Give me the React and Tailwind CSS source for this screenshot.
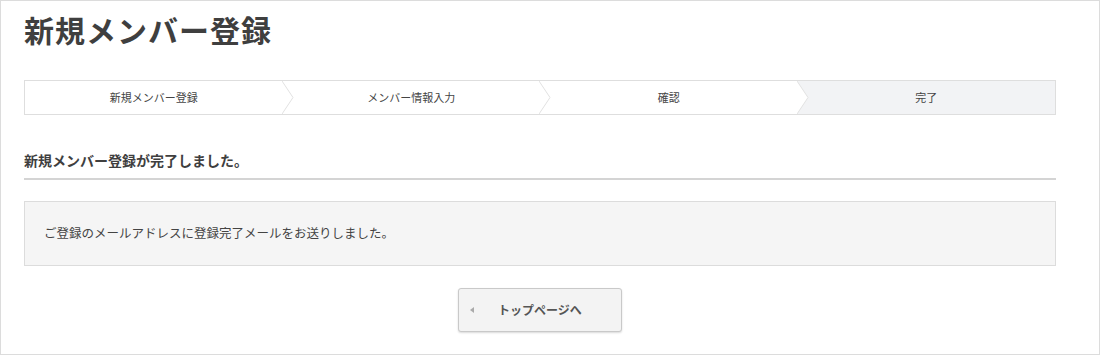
import React from 'react'

const steps = ['新規メンバー登録', 'メンバー情報入力', '確認', '完了']

const font = { fontFamily: '"Noto Sans CJK JP", "Noto Sans", sans-serif' }

// chevron drawn over the start of the next step
const Chevron = () => (
  <svg
    className="absolute top-0 right-[-11px] z-10 h-full w-[12px]"
    viewBox="0 0 12 33"
    preserveAspectRatio="none"
  >
    <polygon points="0,0 11,16.5 0,33" fill="#ffffff" />
    <polyline points="0,0 11,16.5 0,33" fill="none" stroke="#e2e2e2" strokeWidth="1" />
  </svg>
)

export default function App() {
  return (
    <div
      className="box-border h-[355px] w-[1100px] border border-[#dcdcdc] bg-white pl-[23px] pr-[43px] pt-[8px] text-[#444]"
      style={font}
    >
      <h1 className="text-[30px] font-bold leading-[40px] tracking-[1px] text-[#3f3f3f]">新規メンバー登録</h1>

      {/* steps */}
      <div className="mt-[31px] flex h-[35px] border border-[#dedede]">
        {steps.map((s, i) => (
          <div
            key={s}
            className={
              'relative flex flex-1 items-center justify-center text-[11px] text-[#444] ' +
              (i === steps.length - 1 ? 'bg-[#f2f3f5]' : 'bg-white')
            }
          >
            {s}
            {i < steps.length - 1 && <Chevron />}
          </div>
        ))}
      </div>

      <h2 className="mt-[35px] border-b-2 border-[#d4d4d4] pb-[8px] text-[14px] font-bold leading-[20px] text-[#3f3f3f]">
        新規メンバー登録が完了しました。
      </h2>

      <div className="mt-[21px] flex h-[65px] items-center border border-[#dcdcdc] bg-[#f5f5f5] pl-[19px] text-[12.5px] text-[#444]">
        ご登録のメールアドレスに登録完了メールをお送りしました。
      </div>

      <div className="mt-[22px] flex justify-center">
        <button className="relative flex h-[44px] w-[164px] items-center justify-center rounded-[3px] border border-[#c9c9c9] bg-[#f3f3f3] text-[12px] font-bold text-[#555] shadow-[0_1px_2px_rgba(0,0,0,0.15)]">
          <span className="absolute left-[11px] top-1/2 h-0 w-0 -translate-y-1/2 border-y-[3.5px] border-r-[4px] border-y-transparent border-r-[#aaa]" />
          トップページへ
        </button>
      </div>
    </div>
  )
}
